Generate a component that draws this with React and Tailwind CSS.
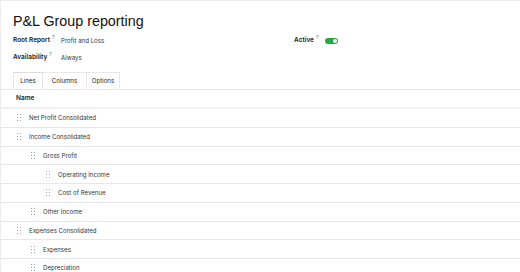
import React from 'react';

const lines = [
  { name: 'Net Profit Consolidated', level: 0 },
  { name: 'Income Consolidated', level: 0 },
  { name: 'Gross Profit', level: 1 },
  { name: 'Operating Income', level: 2 },
  { name: 'Cost of Revenue', level: 2 },
  { name: 'Other Income', level: 1 },
  { name: 'Expenses Consolidated', level: 0 },
  { name: 'Expenses', level: 1 },
  { name: 'Depreciation', level: 1 },
];

const indent = ['pl-[16px]', 'pl-[30px]', 'pl-[45px]'];

const Grip = () => (
  <svg width="4" height="7" viewBox="0 0 4 7" className="shrink-0">
    {[0.5, 3.5, 6.5].map((y) => (
      <React.Fragment key={y}>
        <rect x="0" y={y - 0.5} width="1" height="1" fill="#9ca3af" />
        <rect x="3" y={y - 0.5} width="1" height="1" fill="#9ca3af" />
      </React.Fragment>
    ))}
  </svg>
);

const Hint = () => <sup className="text-[4.5px] text-[#4a90d9] ml-[2px] -top-[3px]">?</sup>;

const App = () => {
  return (
    <div className="h-screen overflow-hidden bg-white border-t border-l border-[#ececec] font-['Inter',sans-serif] text-[#222]">
      {/* Header */}
      <div className="px-3 pt-[10px]">
        <h1 className="font-['Liberation_Sans',sans-serif] text-[14.3px] leading-[20px] text-[#111]">P&amp;L Group reporting</h1>

        <div className="mt-[4px] flex items-center h-[12px] text-[6.5px]">
          <div className="w-[48px] font-semibold">
            Root Report<Hint />
          </div>
          <div className="w-[233px] text-[6.1px] text-[#333]">Profit and Loss</div>
          <div className="w-[31px] font-semibold">
            Active<Hint />
          </div>
          {/* Toggle */}
          <div className="w-[13px] h-[6px] rounded-full bg-[#22a93f] flex items-center justify-end pr-[1px]">
            <div className="w-[4px] h-[4px] rounded-full bg-white" />
          </div>
        </div>

        <div className="mt-[5px] flex items-center h-[12px] text-[6.5px]">
          <div className="w-[48px] font-semibold">
            Availability<Hint />
          </div>
          <div className="text-[6.1px] text-[#333]">Always</div>
        </div>
      </div>

      {/* Tabs */}
      <div className="mt-[8px] flex px-3 border-b border-[#e8e8e8] text-[6.1px]">
        <div className="w-[30px] h-[17px] flex items-center justify-center border border-b-0 border-[#e5e5e5] border-t-[#e6d6d6] bg-white -mb-px">
          Lines
        </div>
        <div className="w-[44px] h-[17px] flex items-center justify-center border border-l-0 border-b-0 border-[#e8e8e8]">
          Columns
        </div>
        <div className="w-[33px] h-[17px] flex items-center justify-center border border-l-0 border-b-0 border-[#e8e8e8]">
          Options
        </div>
      </div>

      {/* Lines table */}
      <div className="text-[6.1px]">
        <div className="h-[19px] flex items-center pl-[15px] text-[6.5px] font-semibold border-b-2 border-[#efefef]">Name</div>
        {lines.map((line) => (
          <div
            key={line.name}
            className={`h-[18.75px] flex items-center gap-[8px] border-b border-[#e6e6e6] ${indent[line.level]}`}
          >
            <Grip />
            <span className="text-[#333]">{line.name}</span>
          </div>
        ))}
      </div>
    </div>
  );
};

export default App;
